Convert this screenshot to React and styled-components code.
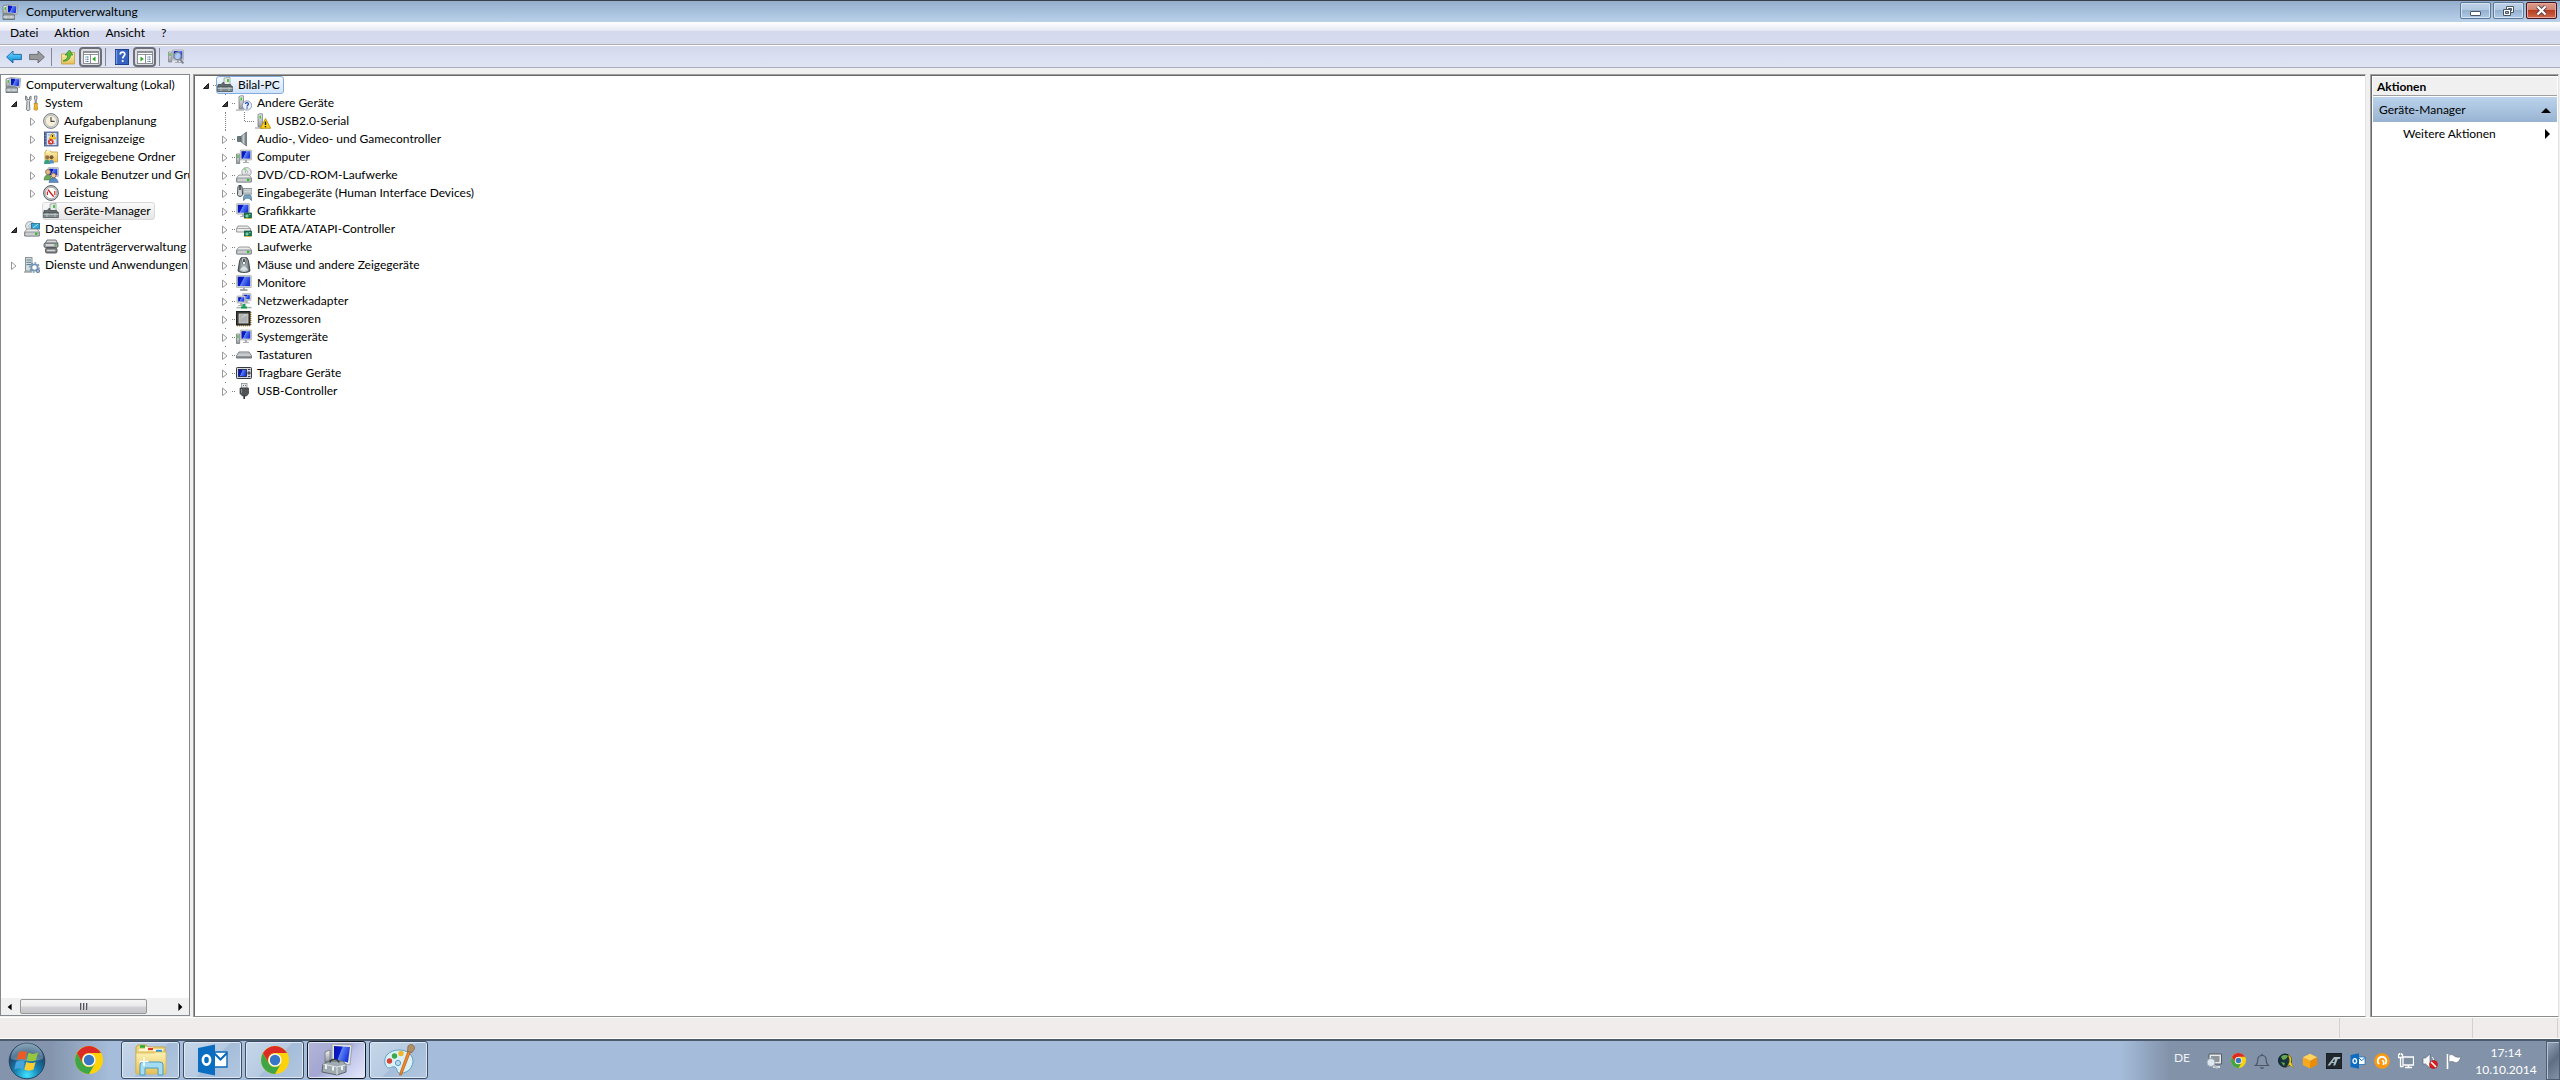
import React, { useState } from 'react';
import styled, { createGlobalStyle } from 'styled-components'

const GlobalStyle = createGlobalStyle`
  * { box-sizing: border-box; }
  body {
    margin: 0;
    font-family: 'Segoe UI', Lato, 'Open Sans', sans-serif;
    font-size: 12px;
    line-height: 18px;
    color: #000;
    background: #f0f0f0;
  }
  button {
    margin: 0;
    padding: 0;
    border: 0;
    background: none;
    font: inherit;
    color: inherit;
  }
  svg { display: block; flex: none; }
`

const Desktop = styled.div`
  display: flex;
  flex-direction: column;
  height: 100vh;
  overflow: hidden;
`

/* window frame */

const TitleBar = styled.header`
  display: flex;
  justify-content: space-between;
  height: 22px;
  padding: 0 3px 0 2px;
  border-top: 1px solid #3a3f47;
  background: linear-gradient(#93aecd, #bad1ea);
`

const Title = styled.h1`
  display: flex;
  align-items: center;
  gap: 8px;
  margin: 0;
  font-size: 12px;
  font-weight: normal;
`

const WindowButtons = styled.div`
  display: flex;
  gap: 2px;
  padding-top: 1px;
`

const WindowButton = styled.button`
  display: flex;
  align-items: center;
  justify-content: center;
  width: 31px;
  height: 17px;
  border: 1px solid ${({ $close }) => $close ? '#431422' : '#5f7894'};
  border-radius: 2px;
  box-shadow: inset 0 0 0 1px ${({ $close }) => $close ? '#e9a99d' : '#d3e3f3'};
  background: ${({ $close }) => $close
    ? 'linear-gradient(#dc9a8b 0%, #d0836f 45%, #b83c20 50%, #cf6a4c 100%)'
    : 'linear-gradient(#bfd3e9 0%, #b1c8e1 45%, #95b1d0 50%, #b0cbe6 100%)'};
`

const MenuBar = styled.nav`
  display: flex;
  align-items: center;
  height: 23px;
  padding-left: 2px;
  border-bottom: 1px solid #b0b0b4;
  background: linear-gradient(#fff 0%, #e6eaf5 38%, #d4d9ed 42%, #d6dbee 100%);
`

const MenuItem = styled.button`
  padding: 0 8px;
`

const ToolBar = styled.div`
  display: flex;
  align-items: center;
  height: 23px;
  padding-left: 2px;
  border-top: 1px solid #fff;
  border-bottom: 1px solid #a9aeba;
  background: linear-gradient(#d3d8ec, #e0e5f5);
`

const ToolButton = styled.button`
  display: flex;
  align-items: center;
  justify-content: center;
  width: 23px;
  height: 20px;
  ${({ $pressed }) => $pressed && `
    border: 2px solid #6c6f78;
    border-radius: 4px;
    background: #dcdde3;
  `}
`

const Separator = styled.span`
  width: 1px;
  height: 18px;
  margin: 0 4px 0 3px;
  background: #85888f;
`

/* panes */

const Main = styled.main`
  display: flex;
  flex: 1;
  min-height: 0;
  padding: 6px 1px 0 0;
`

const TreePane = styled.section`
  display: flex;
  flex-direction: column;
  width: 190px;
  margin-bottom: 1px;
  border: 1px solid #828790;
  background: #fff;
`

const SunkenPane = styled.section`
  min-width: 0;
  border: 1px solid;
  border-color: #a0a0a0 #e3e3e3 #8c8c8c #a0a0a0;
  box-shadow: inset 1px 1px 0 #696969;
  background: #fff;
`

const DevicePane = styled(SunkenPane)`
  flex: 1;
  margin: 0 4px 0 3px;
  padding: 1px 0 0 2px;
`

const ActionPane = styled(SunkenPane)`
  width: 189px;
  padding: 2px 1px 0 2px;
`

const Tree = styled.ul`
  flex: 1;
  margin: 0;
  padding: 1px 0 0;
  overflow: hidden;
  list-style: none;
`

const TreeRow = styled.li`
  display: flex;
  align-items: center;
  height: 18px;
  padding-left: ${({ $level }) => [3, 4, 23][$level]}px;
  white-space: nowrap;
`

const Expander = styled.button`
  display: flex;
  align-items: center;
  justify-content: center;
  flex: none;
  width: 18px;
  height: 18px;
`

const ExpanderGap = styled.span`
  flex: none;
  width: 18px;
`

const Label = styled.span`
  display: flex;
  align-items: center;
  gap: 5px;
  height: 18px;
  padding-right: 3px;
  border: 1px solid transparent;
  ${({ $tone }) => $tone && `
    border-color: ${$tone === 'blue' ? '#84acdd' : '#d9d9d9'};
    border-radius: 3px;
    background: ${$tone === 'blue' ? 'linear-gradient(#f3f8fe, #cfe3fb)' : 'linear-gradient(#f9f9f9, #e6e6e6)'};
  `}
`

/* device tree: every level is indented below its dotted guide */

const DeviceRow = styled.div`
  display: flex;
  align-items: center;
  height: 18px;
  white-space: nowrap;
`

const DeviceList = styled.ul`
  margin: 0;
  padding: 0 0 0 ${({ $root }) => $root ? 3 : 19}px;
  list-style: none;
`

const Dots = styled.span`
  flex: none;
  width: ${({ $long }) => $long ? 9 : 3}px;
  border-top: 1px dotted #808080;
`

const Guide = styled.span`
  flex: none;
  align-self: flex-start;
  height: ${({ $half }) => $half ? '9px' : '18px'};
  margin-left: ${({ $half }) => $half ? '18px' : '7px'};
  border-left: 1px dotted #808080;
`

const DeviceExpander = styled.button`
  display: flex;
  align-items: center;
  justify-content: center;
  flex: none;
  width: 14px;
  height: 18px;
  ${({ $root }) => !$root && `
    background: linear-gradient(#808080, #808080) 7px 0 / 1px 1px no-repeat;
  `}
`

/* scroll bar */

const ScrollBar = styled.div`
  display: flex;
  align-items: center;
  height: 17px;
  background: #f0f0f0;
`

const ScrollArrow = styled.button`
  display: flex;
  align-items: center;
  justify-content: center;
  width: 18px;
  height: 17px;
`

const ScrollTrack = styled.div`
  flex: 1;
  padding-left: 1px;
`

const ScrollThumb = styled.div`
  display: flex;
  align-items: center;
  justify-content: center;
  gap: 2px;
  width: 84%;
  height: 15px;
  border: 1px solid #979797;
  border-radius: 2px;
  background: linear-gradient(#f5f5f5 0%, #e9e9eb 48%, #d4d4d7 52%, #c4c4c9 100%);
`

const Grip = styled.i`
  width: 1px;
  height: 7px;
  background: #54565c;
  box-shadow: 1px 0 0 #b7b8bd;
`

/* action pane */

const ActionTitle = styled.h2`
  margin: 0;
  padding: 1px 4px 0;
  height: 19px;
  border-bottom: 1px solid #a0a0a0;
  background: #f0f0f0;
  font-size: 12px;
  font-weight: bold;
`

const ActionHeader = styled.button`
  display: flex;
  align-items: center;
  justify-content: space-between;
  width: 100%;
  height: 25px;
  margin-top: 1px;
  padding: 0 6px;
  background: linear-gradient(#bbd3ec, #98b3d2);
`

const ActionItem = styled.button`
  display: flex;
  align-items: center;
  justify-content: space-between;
  width: 100%;
  height: 24px;
  padding: 0 5px 0 30px;
`

const StatusBar = styled.footer`
  display: grid;
  grid-template-columns: 1fr 133px 85px;
  height: 22px;
  padding-right: 2px;
  border-top: 1px solid #fff;
  border-bottom: 1px solid #fff;
  background: #f0eceb;
`

const StatusCell = styled.span`
  border-right: 1px solid #d3d0cf;
`

/* task bar */

const TaskBar = styled.footer`
  display: flex;
  height: 41px;
  padding-left: 8px;
  border-top: 2px solid #4c5a6e;
  background: linear-gradient(90deg, #8494ac 0, #8494ac 50px, #a5bdda 110px, #a5bdda calc(100% - 440px), #8292a9 calc(100% - 390px));
`

const StartButton = styled.button`
  width: 38px;
`

const TaskButtons = styled.div`
  display: flex;
  flex: 1;
  gap: 3px;
  padding-left: 13px;
`

const TaskButton = styled.button`
  display: flex;
  align-items: center;
  justify-content: center;
  width: 59px;
  height: 38px;
  border: 1px solid transparent;
  border-radius: 3px;
  ${({ $open }) => $open && `
    border-color: #3d4d63;
    box-shadow: inset 0 0 0 1px #dde8f4;
    background: linear-gradient(135deg, #c7d7e9 0%, #b6cae2 50%, #a5bdda 52%, #b2c7df 100%);
  `}
  ${({ $active }) => $active && `
    border-color: #15171f;
    background: linear-gradient(135deg, #b4b6d8 0%, #a2a6d1 45%, #bfc4ea 60%, #e5e8fb 100%);
  `}
`

const Tray = styled.div`
  display: flex;
  align-items: center;
  color: #fff;
`

const Language = styled.button`
  margin: 0 12px 6px 0;
  color: #eef2f7;
`

const TrayButton = styled.button`
  display: flex;
  align-items: center;
  justify-content: center;
  width: 24px;
  height: 24px;
`

const Clock = styled.button`
  width: 80px;
  line-height: 17px;
  text-align: center;
`

const ShowDesktop = styled.button`
  width: 14px;
  height: 39px;
  border: 1px solid #4f5d71;
  box-shadow: inset 1px 1px 0 #b5c2d1;
  background: linear-gradient(135deg, #98a7ba, #5e6e84 50%, #8492a6);
`

/* icons */

const Svg = ({ size = 16, box = 16, children }) => (
  <svg width={size} height={size} viewBox={`0 0 ${box} ${box}`} aria-hidden="true">{children}</svg>
)

const Paints = () => (
  <svg width="0" height="0" aria-hidden="true">
    <defs>
      <linearGradient id="screen" x1="0" y1="0" x2="1" y2="0.4">
        <stop offset="0" stopColor="#0713a8" /><stop offset="0.45" stopColor="#0a1ccb" />
        <stop offset="0.5" stopColor="#5d83f2" /><stop offset="1" stopColor="#1c36dd" />
      </linearGradient>
      <linearGradient id="metal" x1="0" y1="0" x2="0" y2="1">
        <stop offset="0" stopColor="#f4f5f6" /><stop offset="1" stopColor="#92989d" />
      </linearGradient>
      <linearGradient id="steel" x1="0" y1="0" x2="1" y2="0">
        <stop offset="0" stopColor="#59656b" /><stop offset="0.5" stopColor="#c5d0d4" /><stop offset="1" stopColor="#536067" />
      </linearGradient>
      <linearGradient id="folder" x1="0" y1="0" x2="0" y2="1">
        <stop offset="0" stopColor="#fdf3b5" /><stop offset="1" stopColor="#e5bf58" />
      </linearGradient>
      <linearGradient id="arrowBlue" x1="0" y1="0" x2="0" y2="1">
        <stop offset="0" stopColor="#8edcff" /><stop offset="0.5" stopColor="#36b3f0" /><stop offset="1" stopColor="#1c7fc8" />
      </linearGradient>
      <radialGradient id="orb" cx="0.5" cy="0.9" r="0.85">
        <stop offset="0" stopColor="#41e3ff" /><stop offset="0.4" stopColor="#1683b5" />
        <stop offset="0.75" stopColor="#1d4a70" /><stop offset="1" stopColor="#57809c" />
      </radialGradient>
    </defs>
  </svg>
)

const Screen = ({ x = 0, y = 0, w = 11, h = 9 }) => (
  <g>
    <path d={`M${x + w / 2 - 1} ${y + h}h2v2h2v1h-6v-1h2z`} fill="#a9adb1" />
    <rect x={x} y={y} width={w} height={h} rx="0.5" fill="#d5d8d8" stroke="#9b9f9f" strokeWidth="0.6" />
    <rect x={x + 1.2} y={y + 1.2} width={w - 2.4} height={h - 2.6} fill="url(#screen)" />
  </g>
)

const Tower = ({ x = 0, y = 0, h = 13 }) => (
  <g>
    <path d={`M${x + 0.5} ${y + 1}l2-.7h2.4v${h}h-4.4z`} fill="url(#metal)" stroke="#74797d" strokeWidth="0.8" />
    <rect x={x + 2} y={y + 2} width="1.5" height="3" fill="#45c53a" />
  </g>
)

const DriveBox = ({ y = 8 }) => (
  <g>
    <path d={`M3 ${y}h10l2.5 3v4h-15v-4z`} fill="#e9eaea" stroke="#7e8386" strokeWidth="0.8" />
    <rect x="0.8" y={y + 3} width="14.4" height="4" rx="1" fill="#cbcdce" stroke="#74797c" strokeWidth="0.7" />
    <rect x="11" y={y + 3.8} width="2.4" height="2" fill="#28b81c" />
  </g>
)

const Card = () => (
  <g>
    <rect x="8.5" y="10" width="7" height="5" fill="#1f7b54" stroke="#0c4b33" strokeWidth="0.7" />
    <path d="M10 12h2v2h-2zM13 11.5h1.5" stroke="#9ce2bd" strokeWidth="0.7" fill="#3ec584" />
    <path d="M9.5 15.5h5" stroke="#d6b840" />
  </g>
)

const icons = {
  management: <><Tower x={0.5} y={1} h={9} /><path d="M5 .5l10.6.8-.8 9.2L5 9.3z" fill="#d5d8d8" stroke="#8f9494" strokeWidth="0.7" /><path d="M6 1.6l8.4.6-.6 7L6 8.2z" fill="url(#screen)" /><path d="M1 11l1.5-1H11l1.5 1v4.5H1z" fill="#9fa9ad" stroke="#59646a" strokeWidth="0.8" /><path d="M1 13h11.5M4 12v2M9 12v2" stroke="#e2e6e8" strokeWidth="0.9" /></>,
  tools: <><path d="M1.5 1v3.5l1.5 2L2.5 14.5c0 1.4 3.4 1.4 3.4 0L5.4 6.500l1.6-2V1L5.500 2v2.500H3V2z" fill="#d6dadd" stroke="#6b7277" strokeWidth="0.9" /><path d="M10.500 1h2.400v3l-.6 1v3h-1.200V5l-.6-1z" fill="#d3d7da" stroke="#6b7277" strokeWidth="0.8" /><path d="M10 8.500h3.600l-.5 2 .5 3.600c0 1.500-3.600 1.500-3.600 0l.5-3.600z" fill="#f4ba22" stroke="#b07b0c" strokeWidth="0.700" /></>,
  clock: <><circle cx="8" cy="8" r="7.4" fill="#d9dcde" stroke="#6b6f72" strokeWidth="0.9" /><circle cx="8" cy="8" r="5.6" fill="#f8efd8" stroke="#9e9a8d" strokeWidth="0.5" /><path d="M8 4v4.4h3.6" fill="none" stroke="#424950" strokeWidth="1.1" /></>,
  events: <><rect x="1.5" y="1" width="13.5" height="14" fill="#7791c4" stroke="#3d5285" strokeWidth="0.8" /><rect x="4" y="2" width="9.5" height="12" fill="#dbe3f4" /><path d="M5 4h7M5 12.5h7" stroke="#94a5c9" /><path d="M1 3h2M1 6h2M1 9h2M1 12h2" stroke="#333d5c" /><path d="M9.5 1.8L13 8H6z" fill="#fbcf24" stroke="#b88b0a" strokeWidth="0.5" /><path d="M9.5 4v2" stroke="#222" /><circle cx="7.8" cy="10.8" r="2.8" fill="#d62f1f" /><path d="M6.6 9.6l2.4 2.4M9 9.6L6.6 12" stroke="#fff" strokeWidth="0.9" /></>,
  share: <><path d="M2 3l1-1.5h4L8 3h6.5v10H2z" fill="url(#folder)" stroke="#bb9136" strokeWidth="0.7" /><path d="M4 1.8h3" stroke="#fff" /><circle cx="4.3" cy="8.2" r="2" fill="#9b6f45" /><circle cx="8.5" cy="8.2" r="2" fill="#78583c" /><path d="M1 15c0-6 6.5-6 6.5 0z" fill="#35a184" /><path d="M6 14.5c0-5 5-5 5 0z" fill="#5c90c8" /></>,
  users: <><Screen x={5} y={0.6} w={10.5} h={9} /><circle cx="5" cy="5" r="2.5" fill="#e5bd8c" stroke="#7b542e" strokeWidth="0.7" /><path d="M1 13c0-7 7.5-7 7.5 0z" fill="#6aa85c" stroke="#3d743b" strokeWidth="0.5" /><circle cx="10.5" cy="8.5" r="2.4" fill="#f0c797" stroke="#78502e" strokeWidth="0.7" /><path d="M6 15.6c.4-6 8.8-6 9.2 0z" fill="#5d8cc5" stroke="#2f5b93" strokeWidth="0.5" /></>,
  gauge: <><circle cx="8" cy="8" r="7.4" fill="#c9cdcf" stroke="#55595b" strokeWidth="1" /><circle cx="8" cy="8" r="5.7" fill="#fff" stroke="#898d90" strokeWidth="0.6" /><path d="M4.4 10V6.4M11.8 10V6" stroke="#d0281e" strokeWidth="1.2" fill="none" /><path d="M5 4.6l5.6 7" stroke="#d0150f" strokeWidth="1.5" /></>,
  devices: <><path d="M7 1l6-.6V8H7z" fill="#e7e9e9" stroke="#8d9292" strokeWidth="0.7" /><path d="M10 2h2v3h-2z" fill="#4cc93f" /><path d="M1 7.5h3L6.500 5l1 2.500h6l1.700 2.500H.8z" fill="#626c6f" stroke="#3d4649" strokeWidth="0.7" /><path d="M.6 9.500h14.800v5H.6z" fill="#838e91" stroke="#4c5558" strokeWidth="0.8" /><path d="M.6 11.500h14.800M4 10v4M12 10v4" stroke="#c2cacc" strokeWidth="0.8" /></>,
  storage: <><circle cx="6" cy="5" r="4.5" fill="#dfe3e6" stroke="#8d9499" strokeWidth="0.8" /><circle cx="6" cy="5" r="1.3" fill="#fff" stroke="#8d9499" strokeWidth="0.6" /><rect x="7.5" y="2.5" width="8" height="5.5" fill="#33a6d3" stroke="#1a6d95" strokeWidth="0.8" /><path d="M9 7l5-4" stroke="#a3e0f5" /><DriveBox y={8} /></>,
  disk: <><path d="M4 1h9l2 4H2z" fill="#d4d6d7" stroke="#55595b" strokeWidth="0.8" /><rect x="1" y="4" width="14" height="4.5" rx="1.5" fill="#9fa3a5" stroke="#484c4e" strokeWidth="0.8" /><path d="M3 6h8" stroke="#eee" strokeWidth="1.4" /><rect x="2.5" y="9" width="11.5" height="5" rx="1.5" fill="#85898b" stroke="#3e4244" strokeWidth="0.8" /><path d="M4 11.5h8" stroke="#d7d9da" strokeWidth="1.3" /><path d="M12 6h1.5" stroke="#47cc36" strokeWidth="1.5" /></>,
  services: <><rect x="1.5" y="0.6" width="6.5" height="13.5" fill="#d7dcdf" stroke="#7b858c" strokeWidth="0.9" /><path d="M2.5 3h4.5M2.5 5.3h4.5M2.5 7.6h4.5" stroke="#4f7d88" /><path d="M0 15h8" stroke="#97a0a6" strokeWidth="1.4" /><circle cx="10.5" cy="10.5" r="3.2" fill="#fff" stroke="#7795b5" strokeWidth="1.8" /><circle cx="10.5" cy="10.5" r="4.7" fill="none" stroke="#7795b5" strokeWidth="1.4" strokeDasharray="1.8 1.8" /><circle cx="14" cy="14" r="1.7" fill="#a1b7ce" stroke="#6e89a7" /></>,
  unknown: <><Tower x={2.5} y={0.5} h={13} /><path d="M0 15h8" stroke="#8c9195" /><circle cx="11" cy="10.5" r="4.6" fill="#eef3fb" stroke="#7889a9" strokeWidth="0.8" /><path d="M9.4 9c.2-2 3.4-1.6 3 .2-.2 1-1.4 1-1.4 2.3" stroke="#214ab5" strokeWidth="1.3" fill="none" /><circle cx="11" cy="13" r="0.8" fill="#214ab5" /></>,
  warning: <><Tower x={2.5} y={0.5} h={13} /><path d="M0 15h8" stroke="#8c9195" /><path d="M10.5 5.5l5.2 9.8H5.3z" fill="#fcd116" stroke="#b18500" strokeWidth="0.8" /><path d="M10.5 8.5v3.4M10.5 13v1.2" stroke="#1c1c1c" strokeWidth="1.4" /></>,
  speaker: <><path d="M1.5 5.5h3v5h-3z" fill="#68767e" stroke="#48545b" strokeWidth="0.7" /><path d="M4.5 5.5L10.5 1v14l-6-4.5z" fill="url(#steel)" stroke="#5e6c74" strokeWidth="0.7" /></>,
  computer: <><path d="M.5 5h3.2v9.5H.5z" fill="url(#metal)" stroke="#74797d" strokeWidth="0.8" /><path d="M2 6v3" stroke="#39c12e" strokeWidth="1.4" /><Screen x={4.3} y={1} w={11.2} h={10} /></>,
  dvd: <><circle cx="10.5" cy="5.2" r="4.7" fill="#e3e7e8" stroke="#92999d" strokeWidth="0.8" /><path d="M10.5 5L7.5 2A4.3 4.3 0 0 1 10 1z" fill="#8fd28e" /><circle cx="10.5" cy="5.2" r="1.2" fill="#fff" stroke="#888" strokeWidth="0.6" /><DriveBox y={8} /></>,
  hid: <><path d="M7 3.5h9v5.5H7z" fill="#dce1e4" stroke="#727c82" strokeWidth="0.8" /><path d="M7.5 5.2h8M7.5 7.2h8" stroke="#7d878d" strokeWidth="0.9" strokeDasharray="1 1" /><path d="M2 1.5C3 0 5 0 6 1.5l.5 8c0 2.5-5 2.5-5 0z" fill="#d1d6d8" stroke="#3a4347" strokeWidth="1" /><path d="M4 1v4" stroke="#2b3337" strokeWidth="1.4" /><path d="M7.5 15.5c0-5 1-6 2-5.5h3c2-.6 3 0 3 5.5l-2.5-2.3h-3z" fill="#78a5c6" stroke="#406984" strokeWidth="0.7" /></>,
  graphics: <><Screen x={0.6} y={0.6} w={13} h={10.5} /><Card /></>,
  ide: <><path d="M2 5h9.5l3 2.5v3.5H.6V7.5z" fill="#eceded" stroke="#7d8285" strokeWidth="0.8" /><path d="M.8 7.5h13.6" stroke="#a4a8aa" /><Card /></>,
  drive: <DriveBox y={8} />,
  mouse: <><path d="M5 .8h6l1.5 3L14 14c-3 2-9 2-12 0L3.6 3.8z" fill="url(#steel)" stroke="#333c40" strokeWidth="0.9" /><path d="M5.5 1h4.7L9.5 6.5c-.5 2-2.5 2-3 0z" fill="#f1f3f3" stroke="#424b4f" strokeWidth="0.7" /><path d="M8 2v3" stroke="#2c3437" strokeWidth="1.6" /><path d="M4 13.5c1-5 7-5 8 0" fill="#dce1e2" /></>,
  monitor: <><Screen x={0.5} y={0.5} w={14.8} h={12} /><path d="M4 15h7.5" stroke="#8e9396" strokeWidth="1.4" /></>,
  network: <><Screen x={6.5} y={0.6} w={8.5} h={7} /><Screen x={1} y={3} w={8.5} h={7} /><path d="M8 11v3" stroke="#1aa356" strokeWidth="3" /><path d="M.5 14.6h15" stroke="#a6b4aa" strokeWidth="1.5" /><path d="M5 14.5h6" stroke="#159b4f" strokeWidth="2" /></>,
  cpu: <><path d="M1 14.8h14M14.8 1v13.5" stroke="#c89c33" strokeWidth="1.6" strokeDasharray="1 1" /><rect x="0.5" y="0.5" width="13.5" height="13.5" fill="#3b3b39" stroke="#1f1f1e" /><rect x="3" y="3" width="9" height="9" fill="#aeb0b0" stroke="#d9dada" strokeWidth="0.7" /><path d="M3.5 8.5l5-5H12z" fill="#cacccc" /></>,
  keyboard: <><path d="M3 5h10l2.6 4v2H.4V9z" fill="#e5e7e8" stroke="#656b6f" strokeWidth="0.9" /><path d="M3.5 6.4h9M2.5 8h11" stroke="#7d8387" strokeWidth="1" strokeDasharray="1 1" /><path d="M.6 10h14.8" stroke="#696f73" strokeWidth="1.4" /></>,
  portable: <><rect x="0.5" y="2.5" width="15" height="11" rx="0.8" fill="#d6d9dc" stroke="#343a40" /><rect x="2.5" y="4.5" width="8" height="7" fill="url(#screen)" stroke="#181d4a" strokeWidth="0.8" /><circle cx="13" cy="8" r="1.7" fill="#4b5156" /><path d="M12 4.5h2.3M12 11.5h2.3" stroke="#353b40" /></>,
  usb: <><rect x="5.5" y="0.5" width="5.5" height="4.5" fill="#e3e5e6" stroke="#8a8e90" strokeWidth="0.8" /><path d="M7 2.5h.8M9 2.5h.8" stroke="#555" /><path d="M4 5h8.5v5.5L10.5 13h-4L4 10.5z" fill="#515456" stroke="#303335" strokeWidth="0.7" /><path d="M5.5 6v4" stroke="#8d9193" /><path d="M8.2 13v3" stroke="#303335" strokeWidth="1.6" /></>,
  back: <path d="M.6 8L7 2v3.4h8.4v5.2H7V14z" fill="url(#arrowBlue)" stroke="#18649f" strokeWidth="0.9" strokeLinejoin="round" />,
  forward: <path d="M15.4 8L9 2v3.4H.6v5.2H9V14z" fill="#97999c" stroke="#66686b" strokeWidth="0.9" strokeLinejoin="round" />,
  folderUp: <><path d="M1.5 5h5l1-1.5h7V15h-13z" fill="url(#folder)" stroke="#c79b3a" strokeWidth="0.8" /><path d="M3 12c3-1 5-3 4.6-6H5l4.5-5L13 6h-2.6C10.8 10 7 12.5 3 12z" fill="#55bf3d" stroke="#2d8422" strokeWidth="0.7" /></>,
  consoleTree: <><rect x="0.5" y="2.5" width="15" height="12" fill="#fff" stroke="#8a8d93" /><path d="M1 3.500h14M1 5.500h14" stroke="#8f9298" /><path d="M7.500 6v8" stroke="#8a8d93" /><path d="M2.500 8h3M2.500 10.200h3M2.500 12.400h3" stroke="#2e5c96" strokeDasharray="1 .5 2" /><path d="M12.500 7.500v5l-3.300-2.500z" fill="#2da327" /></>,
  actionTree: <><rect x="0.5" y="2.5" width="15" height="12" fill="#fff" stroke="#8a8d93" /><path d="M1 3.500h14M1 5.500h14" stroke="#8f9298" /><path d="M8.500 6v8" stroke="#8a8d93" /><path d="M10.500 8h3M10.500 10.200h3M10.500 12.400h3" stroke="#2e5c96" strokeDasharray="1 .5 2" /><path d="M3.500 7.500v5l3.300-2.500z" fill="#2da327" /></>,
  help: <><rect x="1.5" y="0.5" width="13" height="15" fill="#3463c0" stroke="#20428e" /><path d="M2.5 1v14" stroke="#799be1" strokeWidth="1.4" /><path d="M6.2 5.4C6.2 2.2 11 2.4 10.8 5.2 10.7 7.2 8.7 7.2 8.7 9.6" fill="none" stroke="#fff" strokeWidth="1.7" /><circle cx="8.7" cy="12" r="1.1" fill="#fff" /></>,
  scan: <><path d="M.5 3h3.2v10H.5z" fill="url(#metal)" stroke="#858a8e" strokeWidth="0.8" /><path d="M2 4v3" stroke="#39c12e" strokeWidth="1.3" /><Screen x={4.5} y={1} w={11} h={10} /><circle cx="9.5" cy="7" r="3.6" fill="#c5e0fa" fillOpacity="0.8" stroke="#7c8791" strokeWidth="1.3" /><path d="M12 10l3.300 4.500" stroke="#79848c" strokeWidth="2" /></>,
}

const Icon = ({ name, size }) => <Svg size={size}>{icons[name]}</Svg>

const Triangle = ({ open }) => (
  <svg width="8" height="9" viewBox="0 0 8 9" aria-hidden="true">
    {open
      ? <path d="M6.5 2.5v5h-5z" fill="#404040" stroke="#1c1c1c" />
      : <path d="M1.5 1L6 5 1.500 8.500z" fill="#fff" stroke="#989898" />}
  </svg>
)

const Arrow = ({ dir, size = 10 }) => (
  <Svg size={size} box={10}>
    <path d={{ left: 'M7 1v8L2 5z', right: 'M3 0v10l5-5z', up: 'M0 8h10L5 3z' }[dir]} fill="#000" />
  </Svg>
)

const StartOrb = () => (
  <Svg size={38} box={38}>
    <circle cx="19" cy="19" r="17.8" fill="url(#orb)" stroke="#26435e" />
    <path d="M3 17a16 16 0 0 1 32 0c-9 3-22 3-32 0z" fill="#fff" fillOpacity="0.26" />
    <path d="M10.5 10.5c3-1.6 5.5-1.6 8.5-.2L17.200 18c-2.700-1.300-5.700-1.200-8.700.2z" fill="#ea5b27" />
    <path d="M20.500 10.800c3 1.600 5.900 1.500 9.500-.2L28 18c-3 1.700-6.300 1.700-9.300.3z" fill="#95c63c" />
    <path d="M8 19.800c3-1.400 5.800-1.400 8.700-.2L15 27.200c-2.800-1.300-5.500-1.200-8.700.3z" fill="#46a5df" />
    <path d="M18.200 20c3 1.500 6.300 1.500 9.400-.1L25.500 27.500c-3.200 1.600-6.200 1.500-9.200 0z" fill="#fccb32" />
  </Svg>
)

const Chrome = ({ size = 28 }) => (
  <Svg size={size} box={28}>
    <circle cx="14" cy="14" r="14" fill="#fdd20a" />
    <path d="M1.900 7A14 14 0 0 0 14 28l6.100-10.500A7 7 0 0 1 7.900 17.500z" fill="#3fa648" />
    <path d="M1.900 7A14 14 0 0 1 26.100 7H14a7 7 0 0 0-6.100 10.500z" fill="#da2b27" />
    <circle cx="14" cy="14" r="6.600" fill="#f7f7f4" />
    <circle cx="14" cy="14" r="5.200" fill="#3775c5" />
  </Svg>
)

const Outlook = ({ size = 32 }) => (
  <Svg size={size} box={32}>
    <path d="M17 8h13v15H17z" fill="#fff" stroke="#0a68bb" strokeWidth="1.4" />
    <path d="M17 9l6.500 6.500L30 9" fill="none" stroke="#0a68bb" strokeWidth="2" />
    <path d="M1 4l17-3.500v31L1 28z" fill="#0b6dc1" />
    <ellipse cx="9.500" cy="16" rx="3.600" ry="4.600" fill="none" stroke="#fff" strokeWidth="2.600" />
  </Svg>
)

const Explorer = () => (
  <Svg size={32} box={32}>
    <path d="M1 3l2-2h8l2 2h17v26H1z" fill="#edd57b" stroke="#c7a548" />
    <path d="M4 6h24M10 4h8" stroke="#fff8d8" strokeWidth="2" />
    <path d="M5 2.500h5" stroke="#1bad37" strokeWidth="2.400" /><path d="M13 5h5" stroke="#dc3a26" strokeWidth="2.400" /><path d="M21 7h6" stroke="#2a94df" strokeWidth="2.400" />
    <path d="M1 9h18l2-1h10v22H1z" fill="url(#folder)" stroke="#d8b659" strokeWidth="0.8" />
    <path d="M5 31V21q0-3 3-3h17q3 0 3 3v10h-5v-7H10v7z" fill="#a4dcf1" stroke="#4a9dc3" />
    <path d="M9 13v9M4.500 17.500h9" stroke="#fff" strokeWidth="1.500" />
  </Svg>
)

const Toolbox = () => (
  <Svg size={32} box={32}>
    <path d="M4 8l5-2v12H4z" fill="url(#metal)" stroke="#666c70" strokeWidth="0.7" />
    <path d="M11 0l20 1-2 20-18-4z" fill="#e5e7e7" stroke="#919696" strokeWidth="0.8" />
    <path d="M13 2l16 1-2 15.500-14-3z" fill="url(#screen)" />
    <path d="M2 20l6-3h14l3 4v7l-9 3-15-3z" fill="#9fabb0" stroke="#59666b" />
    <path d="M2 20l14 3 9-2M16 23v8" stroke="#e0e6e8" fill="none" />
    <path d="M9 18.500c0-4 8-4 9 0" stroke="#363e42" strokeWidth="1.600" fill="none" />
    <path d="M5 21v4M12 22.500v4M21 22v4" stroke="#edf1f2" strokeWidth="2" />
  </Svg>
)

const Paint = () => (
  <Svg size={32} box={32}>
    <path d="M2 20C0 12 7 6 16 6s14 5 14 12c-1 8-8 12-14 11-3-1-1-5-4-6s-4 1-6 1c-2 0-3-2-4-4z" fill="#dcf0f8" stroke="#60a3c2" />
    <circle cx="6.500" cy="17" r="2.700" fill="#d84237" /><circle cx="11.500" cy="12" r="2.700" fill="#3ba94b" />
    <circle cx="18" cy="9.500" r="2.700" fill="#f1b629" /><circle cx="15" cy="19" r="2.600" fill="#b9def0" stroke="#5a9cc2" />
    <path d="M27.500 8l-9 23h-2l1.500-5L25 7z" fill="#ed8a2c" stroke="#b45c12" strokeWidth="0.700" />
    <path d="M24.500 7.500L25 2l3-2 2 1 2 3-3 4.500z" fill="#b29067" stroke="#80603e" strokeWidth="0.700" />
  </Svg>
)

const trayIcons = [
  ['Anzeige', <Svg><path d="M3 1h12.5v10H3z" fill="#e9eaea" stroke="#555d66" /><path d="M5 3h8.5v6H5z" fill="#8d959d" /><path d="M7 14h7" stroke="#ddd" strokeWidth="2" /><circle cx="5" cy="9.5" r="4" fill="#dfe7ee" stroke="#9ca8b3" /><path d="M8 12.5l3.5 3" stroke="#b9bec3" strokeWidth="2" /></Svg>],
  ['Chrome', <Chrome size={15} />],
  ['Benachrichtigungen', <Svg><path d="M1.500 12.500c2.500-1.500 2-3 2.300-6C4 3.800 6 2.500 8 2.500s4 1.300 4.200 4c.3 3-.2 4.500 2.300 6z" fill="none" stroke="#4b5765" strokeWidth="1.200" /><path d="M8 .8v1.700M6.500 14.200c.5 1.400 2.500 1.400 3 0" stroke="#4b5765" strokeWidth="1.300" fill="none" /></Svg>],
  ['Netzwerkschutz', <Svg><circle cx="7" cy="7.500" r="6.500" fill="#17333f" stroke="#0c1d25" /><path d="M3 4c2-3 6-2 7-1L8 6 5 7zM3 9l4 1-1 3z" fill="#68a84d" /><path d="M10 2c3 1 4 4 3 7l2.500 6-4-3-3 2c3-3 4-7 1.500-12z" fill="#f0cf2a" stroke="#8b7711" strokeWidth="0.500" /></Svg>],
  ['Paket', <Svg><path d="M8 .8l7.200 3.500L8 8 .8 4.300z" fill="#ffd35b" /><path d="M.8 4.300L8 8v7.500L.8 12z" fill="#f7a91b" /><path d="M15.200 4.300L8 8v7.500l7.200-3.500z" fill="#e98c0a" /></Svg>],
  ['Suite', <Svg><path d="M0 0h16v16H0z" fill="#20282e" stroke="#12171b" /><path d="M1.500 12.500L8 4h6.500l-.8 2h-2l-2.500 6.500h-2L9 6.500H8L4 12.500z" fill="#a8bac3" /><path d="M4 9.500h4" stroke="#a8bac3" /></Svg>],
  ['Outlook', <Outlook size={16} />],
  ['Avast', <Svg><circle cx="8" cy="8" r="7.800" fill="#fb9a10" /><path d="M5 11a4.200 4.200 0 1 1 6 0" fill="none" stroke="#fff" strokeWidth="2" /><path d="M8 7.500c1.800 0 1.800 1.500 1.500 4.500" fill="none" stroke="#fff" strokeWidth="1.600" /></Svg>],
  ['Netzwerk', <Svg><path d="M5 4h10.500v8H5z" fill="#7e8da0" stroke="#fff" strokeWidth="1.300" /><path d="M7 14.500h7M10.500 12v2" stroke="#fff" strokeWidth="1.600" /><path d="M.5 1v3.500h4V1M2.500 4.500v9h3M1.500 0v2M3.500 0v2" stroke="#fff" strokeWidth="1.300" fill="none" /></Svg>],
  ['Lautstärke', <Svg><path d="M1 5h2.500L8 1v14l-4.500-4H1z" fill="#f5f7f9" stroke="#58626d" strokeWidth="0.600" /><path d="M10 4c1 1 1.500 2 1.500 3" stroke="#fff" fill="none" /><circle cx="11.500" cy="11.500" r="4" fill="#dc1d1d" stroke="#a80c0c" strokeWidth="0.500" /><path d="M9 9l5 5" stroke="#fff" strokeWidth="1.600" /></Svg>],
  ['Wartungscenter', <Svg><path d="M1.500 1v15" stroke="#fff" strokeWidth="1.600" /><path d="M3 2c3-1 4 0 6 1.500 2 1 4 1 6 .3-1 2.500-1.500 4.500-4 5.700-2 .8-3-1-5-1-1 0-2 0-3 .7z" fill="#fff" stroke="#4f5965" strokeWidth="0.500" /></Svg>],
]

const consoleRows = [
  { level: 1, open: true, icon: 'tools', text: 'System' },
  { level: 2, open: false, icon: 'clock', text: 'Aufgabenplanung' },
  { level: 2, open: false, icon: 'events', text: 'Ereignisanzeige' },
  { level: 2, open: false, icon: 'share', text: 'Freigegebene Ordner' },
  { level: 2, open: false, icon: 'users', text: 'Lokale Benutzer und Gruppen' },
  { level: 2, open: false, icon: 'gauge', text: 'Leistung' },
  { level: 2, icon: 'devices', text: 'Geräte-Manager', selected: true },
  { level: 1, open: true, icon: 'storage', text: 'Datenspeicher' },
  { level: 2, icon: 'disk', text: 'Datenträgerverwaltung' },
  { level: 1, open: false, icon: 'services', text: 'Dienste und Anwendungen' },
]

const deviceClasses = [
  ['speaker', 'Audio-, Video- und Gamecontroller'],
  ['computer', 'Computer'],
  ['dvd', 'DVD/CD-ROM-Laufwerke'],
  ['hid', 'Eingabegeräte (Human Interface Devices)'],
  ['graphics', 'Grafikkarte'],
  ['ide', 'IDE ATA/ATAPI-Controller'],
  ['drive', 'Laufwerke'],
  ['mouse', 'Mäuse und andere Zeigegeräte'],
  ['monitor', 'Monitore'],
  ['network', 'Netzwerkadapter'],
  ['cpu', 'Prozessoren'],
  ['computer', 'Systemgeräte'],
  ['keyboard', 'Tastaturen'],
  ['portable', 'Tragbare Geräte'],
  ['usb', 'USB-Controller'],
]

const DeviceTree = () => {
  const [open, setOpen] = useState(true)
  return (
    <DeviceList $root>
      <li>
        <DeviceRow>
          <DeviceExpander $root aria-label="Bilal-PC"><Triangle open /></DeviceExpander>
          <Dots />
          <Label $tone="blue"><Icon name="devices" />Bilal-PC</Label>
        </DeviceRow>
        <DeviceList>
          <li>
            <DeviceRow>
              <DeviceExpander aria-label="Andere Geräte" onClick={() => setOpen(v => !v)}><Triangle open={open} /></DeviceExpander>
              <Dots />
              <Label><Icon name="unknown" />Andere Geräte</Label>
            </DeviceRow>
            {open && (
              <DeviceRow>
                <Guide />
                <Guide $half />
                <Dots $long />
                <Label><Icon name="warning" />USB2.0-Serial</Label>
              </DeviceRow>
            )}
          </li>
          {deviceClasses.map(([icon, text]) => (
            <li key={text}>
              <DeviceRow>
                <DeviceExpander aria-label={text}><Triangle /></DeviceExpander>
                <Dots />
                <Label><Icon name={icon} />{text}</Label>
              </DeviceRow>
            </li>
          ))}
        </DeviceList>
      </li>
    </DeviceList>
  )
}

const App = () => (
  <Desktop>
    <GlobalStyle />
    <TitleBar>
      <Title><Icon name="management" />Computerverwaltung</Title>
      <WindowButtons>
        <WindowButton aria-label="Minimieren"><svg width="12" height="11"><rect x="0.5" y="6.5" width="10" height="4" rx="0.5" fill="#fff" stroke="#4b5664" /></svg></WindowButton>
        <WindowButton aria-label="Verkleinern"><svg width="13" height="12"><path d="M4.5 1.5h7v6h-7z" fill="#fff" stroke="#4b5664" /><path d="M6.5 3.5h3v2h-3z" fill="#9db5d0" stroke="#4b5664" /><path d="M1.5 4.5h7v6h-7z" fill="#fff" stroke="#4b5664" /><path d="M3.5 6.5h3v2h-3z" fill="#9db5d0" stroke="#4b5664" /></svg></WindowButton>
        <WindowButton $close aria-label="Schließen"><svg width="13" height="11"><path d="M2.5 1.5l8 8M10.5 1.5l-8 8" stroke="#55404c" strokeWidth="4" /><path d="M2.5 1.5l8 8M10.5 1.5l-8 8" stroke="#fff" strokeWidth="2.2" /></svg></WindowButton>
      </WindowButtons>
    </TitleBar>
    <MenuBar>
      {['Datei', 'Aktion', 'Ansicht', '?'].map(text => <MenuItem key={text}>{text}</MenuItem>)}
    </MenuBar>
    <ToolBar>
      <ToolButton aria-label="Zurück"><Icon name="back" /></ToolButton>
      <ToolButton aria-label="Vorwärts"><Icon name="forward" /></ToolButton>
      <Separator />
      <ToolButton aria-label="Eine Ebene nach oben"><Icon name="folderUp" /></ToolButton>
      <ToolButton $pressed aria-label="Konsolenstruktur"><Icon name="consoleTree" /></ToolButton>
      <Separator />
      <ToolButton aria-label="Hilfe"><Icon name="help" /></ToolButton>
      <ToolButton $pressed aria-label="Aktionsbereich"><Icon name="actionTree" /></ToolButton>
      <Separator />
      <ToolButton aria-label="Nach geänderter Hardware suchen"><Icon name="scan" /></ToolButton>
    </ToolBar>
    <Main>
      <TreePane>
        <Tree>
          <TreeRow $level={0}>
            <Label><Icon name="management" />Computerverwaltung (Lokal)</Label>
          </TreeRow>
          {consoleRows.map(({ level, open, icon, text, selected }) => (
            <TreeRow key={text} $level={level}>
              {open === undefined ? <ExpanderGap /> : <Expander aria-label={text}><Triangle open={open} /></Expander>}
              <Label $tone={selected && 'grey'}><Icon name={icon} />{text}</Label>
            </TreeRow>
          ))}
        </Tree>
        <ScrollBar>
          <ScrollArrow aria-label="Nach links"><Arrow dir="left" size={8} /></ScrollArrow>
          <ScrollTrack><ScrollThumb><Grip /><Grip /><Grip /></ScrollThumb></ScrollTrack>
          <ScrollArrow aria-label="Nach rechts"><Arrow dir="right" size={8} /></ScrollArrow>
        </ScrollBar>
      </TreePane>
      <DevicePane><DeviceTree /></DevicePane>
      <ActionPane>
        <ActionTitle>Aktionen</ActionTitle>
        <ActionHeader>Geräte-Manager<Arrow dir="up" /></ActionHeader>
        <ActionItem>Weitere Aktionen<Arrow dir="right" /></ActionItem>
      </ActionPane>
    </Main>
    <StatusBar><StatusCell /><StatusCell /><StatusCell /></StatusBar>
    <TaskBar>
      <StartButton aria-label="Start"><StartOrb /></StartButton>
      <TaskButtons>
        <TaskButton aria-label="Chrome"><Chrome /></TaskButton>
        <TaskButton $open aria-label="Explorer"><Explorer /></TaskButton>
        <TaskButton $open aria-label="Outlook"><Outlook /></TaskButton>
        <TaskButton $open aria-label="Chrome-Fenster"><Chrome /></TaskButton>
        <TaskButton $open $active aria-label="Computerverwaltung"><Toolbox /></TaskButton>
        <TaskButton $open aria-label="Paint"><Paint /></TaskButton>
      </TaskButtons>
      <Tray>
        <Language>DE</Language>
        {trayIcons.map(([label, icon]) => <TrayButton key={label} aria-label={label}>{icon}</TrayButton>)}
        <Clock>17:14<br />10.10.2014</Clock>
        <ShowDesktop aria-label="Desktop anzeigen" />
      </Tray>
    </TaskBar>
    <Paints />
  </Desktop>
)

export default App;
